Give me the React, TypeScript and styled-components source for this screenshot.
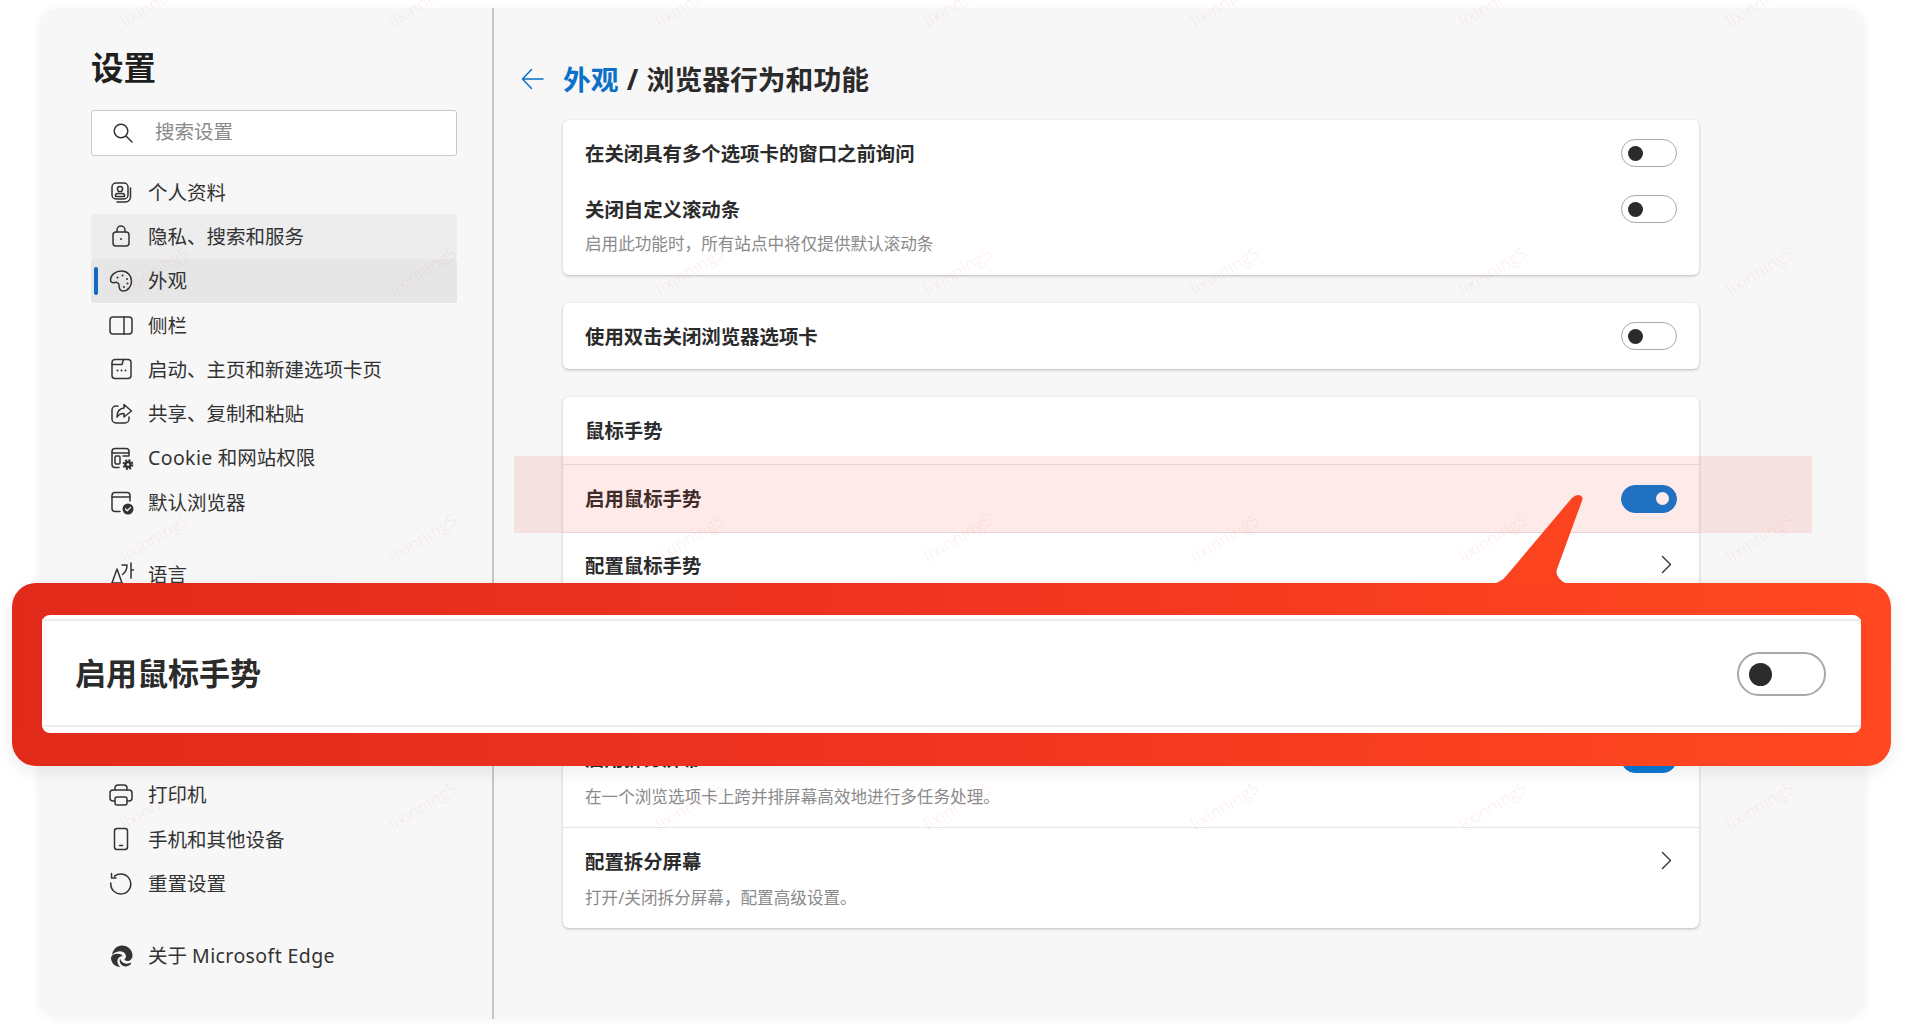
import React from 'react';
import styled, { createGlobalStyle } from 'styled-components';

const Global = createGlobalStyle`
  html, body { margin: 0; padding: 0; background: #fff; overflow: hidden; }
  body { font-family: "Noto Sans", "Noto Sans CJK SC", sans-serif; color: #303030; }
`;

const CJK = `"Noto Sans", "Noto Sans CJK SC", sans-serif`;

const Page = styled.div`
  position: relative;
  box-sizing: border-box;
  width: 1907px;
  height: 1026px;
  padding: 8px 41px 7px 38px;
  overflow: hidden;
  background: #fff;
`;
const Win = styled.div`
  display: flex;
  height: 100%;
  background: #f7f7f7;
  border-radius: 22px;
  box-shadow: 0 1px 9px rgba(0, 0, 0, 0.05);
`;
const Sidebar = styled.aside`
  box-sizing: border-box;
  width: 456px;
  flex: none;
  padding: 40px 35px 0 53px;
  border-right: 2px solid #c8c8c8;
`;
const Title = styled.h1`
  margin: 0;
  font: 700 32.5px/40px ${CJK};
  color: #1f1f1f;
`;
const Search = styled.div`
  box-sizing: border-box;
  display: flex;
  align-items: center;
  height: 46px;
  margin-top: 22px;
  padding-left: 20px;
  gap: 21px;
  background: #fff;
  border: 1.5px solid #c9c9c9;
  border-radius: 3px;
`;
const Placeholder = styled.span`
  padding-bottom: 2px;
  font: 400 19.5px/24px ${CJK};
  color: #8a8a8a;
`;
const Nav = styled.nav`
  margin-top: 14px;
`;
const NavRow = styled.div<{ $bg?: string; $gap?: number }>`
  position: relative;
  display: flex;
  align-items: center;
  height: 44.3px;
  margin-top: ${(p) => p.$gap ?? 0}px;
  padding-left: 17px;
  gap: 14px;
  background: ${(p) => p.$bg ?? 'transparent'};
  border-radius: 3px;
  font: 400 19.5px/24px ${CJK};
  color: #333;
`;
const NavText = styled.span`
  padding-top: 1px;
`;
const Latin = styled.span`
  letter-spacing: 0.4px;
`;
const Marker = styled.span`
  position: absolute;
  left: 3px;
  top: 8px;
  bottom: 8px;
  width: 4px;
  border-radius: 2px;
  background: #0f6cc4;
`;
const IconBox = styled.span`
  display: flex;
  align-items: center;
  justify-content: center;
  width: 26px;
  height: 26px;
  flex: none;
  color: #333;
`;
const Main = styled.main`
  flex: 1;
  padding: 51px 0 0 27px;
`;
const Heading = styled.div`
  display: flex;
  align-items: center;
  gap: 19px;
  height: 40px;
  font: 700 27.8px/40px ${CJK};
  word-spacing: 1px;
  color: #2b2b2b;
`;
const Crumb = styled.span`
  color: #0b70c8;
`;
const Cards = styled.div`
  display: flex;
  flex-direction: column;
  gap: 28px;
  width: 1136px;
  margin: 21px 0 0 42px;
`;
const Card = styled.section<{ $pt?: number; $pb?: number }>`
  background: #fff;
  border-radius: 6px;
  padding: ${(p) => p.$pt ?? 0}px 0 ${(p) => p.$pb ?? 0}px;
  box-shadow: 0 1px 3px rgba(0, 0, 0, 0.25);
`;
const Row = styled.div<{ $h: number; $line?: boolean; $mt?: number }>`
  box-sizing: border-box;
  display: flex;
  align-items: center;
  justify-content: space-between;
  height: ${(p) => p.$h}px;
  margin-top: ${(p) => p.$mt ?? 0}px;
  padding: 0 22px;
  border-top: ${(p) => (p.$line ? '1px solid #e6e6e6' : '0')};
`;
const Label = styled.span<{ $low?: boolean; $high?: boolean }>`
  padding: ${(p) => (p.$low ? 2 : 0)}px 0 ${(p) => (p.$high ? 2 : 0)}px;
  font: 700 19.4px/26px ${CJK};
  color: #2b2b2b;
`;
const Desc = styled.div<{ $mt?: number; $pb?: number }>`
  margin-top: ${(p) => p.$mt ?? 0}px;
  padding: 0 0 ${(p) => p.$pb ?? 0}px 22px;
  font: 400 16.6px/20px ${CJK};
  color: #8a8a8a;
`;
const Toggle = styled.span<{ $on?: boolean }>`
  box-sizing: border-box;
  display: flex;
  align-items: center;
  justify-content: ${(p) => (p.$on ? 'flex-end' : 'flex-start')};
  width: 56px;
  height: 28px;
  padding: 0 ${(p) => (p.$on ? 7 : 6)}px;
  border-radius: 14px;
  background: ${(p) => (p.$on ? '#0a78d4' : '#fff')};
  border: 1.5px solid ${(p) => (p.$on ? '#0a78d4' : '#a8a8a8')};
  &::after {
    content: '';
    width: ${(p) => (p.$on ? 13 : 15)}px;
    height: ${(p) => (p.$on ? 13 : 15)}px;
    border-radius: 50%;
    background: ${(p) => (p.$on ? '#fff' : '#2b2b2b')};
  }
`;
const Chevron = styled.svg`
  width: 11px;
  height: 19px;
  margin: -4px 5px 0 0;
`;
const Highlight = styled.div`
  position: absolute;
  left: 514px;
  top: 456px;
  width: 1298px;
  height: 77px;
  background: rgba(250, 60, 40, 0.1);
`;
const Marks = styled.div`
  position: absolute;
  left: 21px;
  top: -131px;
  display: grid;
  grid-template-columns: repeat(7, 267.5px);
  grid-auto-rows: 267.5px;
  pointer-events: none;
`;
const Mark = styled.span`
  display: flex;
  align-items: center;
  justify-content: center;
  transform: rotate(-31deg);
  font: 400 17px/20px "Open Sans", sans-serif;
  color: rgba(235, 90, 90, 0.09);
`;
const Banner = styled.div`
  position: absolute;
  left: 12px;
  top: 583px;
  box-sizing: border-box;
  width: 1879px;
  height: 183px;
  padding: 32px 30px 33px 30px;
  border-radius: 24px;
  background: linear-gradient(92deg, #e22a1b 0%, #ee3320 45%, #fb4320 85%, #ff4822 100%);
  box-shadow: 0 6px 18px rgba(0, 0, 0, 0.08);
`;
const Tail = styled.svg`
  position: absolute;
  left: 1468px;
  top: -93px;
  width: 110px;
  height: 96px;
`;
const BannerCard = styled.div`
  box-sizing: border-box;
  height: 100%;
  padding: 4px 0 6px;
  background: #fff;
  border-radius: 8px;
`;
const BannerRow = styled.div`
  box-sizing: border-box;
  display: flex;
  align-items: center;
  justify-content: space-between;
  height: 100%;
  padding: 0 35px 0 33px;
  border-top: 2px solid #ececec;
  border-bottom: 2px solid #ececec;
`;
const BannerLabel = styled.span`
  font: 700 31px/40px ${CJK};
  color: #2b2b2b;
`;
const BigToggle = styled.span`
  box-sizing: border-box;
  display: flex;
  align-items: center;
  width: 89px;
  height: 44px;
  margin-top: 2px;
  padding-left: 10px;
  border-radius: 22px;
  background: #fff;
  border: 2px solid #a8a8a8;
  &::after {
    content: '';
    width: 23px;
    height: 23px;
    border-radius: 50%;
    background: #2b2b2b;
  }
`;

const Ico = ({ children }: { children: React.ReactNode }) => (
  <IconBox>
    <svg width="26" height="26" viewBox="0 0 26 26" fill="none" stroke="currentColor" strokeWidth="1.5" strokeLinecap="round" strokeLinejoin="round">
      {children}
    </svg>
  </IconBox>
);

const icons: Record<string, React.ReactNode> = {
  profile: (
    <>
      <rect x="4" y="4" width="16" height="16" rx="4" />
      <path d="M22.5 9v9a5 5 0 0 1-5 5H9" />
      <circle cx="12" cy="10" r="2.6" />
      <path d="M7.5 17.5v-1a2 2 0 0 1 2-2h5a2 2 0 0 1 2 2v1z" />
    </>
  ),
  lock: (
    <>
      <rect x="5" y="9" width="16" height="14" rx="3" />
      <path d="M9 9V7a4 4 0 0 1 8 0v2" />
      <circle cx="13" cy="16" r="1" fill="currentColor" stroke="none" />
    </>
  ),
  palette: (
    <>
      <path d="M13.5 3C7.5 3 2.5 7 2.5 12c0 2.5 2.5 3 4.5 2.5 2-.5 4 .5 4 2.5s.5 6 4 6c5 0 8.5-4.5 8.5-10S19.5 3 13.5 3z" />
      <circle cx="9.500" cy="9.500" r="1" fill="currentColor" stroke="none" />
      <circle cx="14.500" cy="7.500" r="1" fill="currentColor" stroke="none" />
      <circle cx="19" cy="11" r="1" fill="currentColor" stroke="none" />
      <circle cx="19.500" cy="15.500" r="1" fill="currentColor" stroke="none" />
      <circle cx="16" cy="19" r="1" fill="currentColor" stroke="none" />
    </>
  ),
  sidebar: (
    <>
      <rect x="2" y="5" width="22" height="17" rx="3" />
      <path d="M16 5v17" />
    </>
  ),
  startup: (
    <>
      <rect x="4" y="3.500" width="19" height="19" rx="3" />
      <path d="M4 8.500h10l1.500-5" />
      <circle cx="9.500" cy="14.500" r="1" fill="currentColor" stroke="none" />
      <circle cx="13.500" cy="14.500" r="1" fill="currentColor" stroke="none" />
      <circle cx="17.500" cy="14.500" r="1" fill="currentColor" stroke="none" />
    </>
  ),
  share: (
    <>
      <path d="M10 5H8a4 4 0 0 0-4 4v9a4 4 0 0 0 4 4h9a4 4 0 0 0 4-4v-2" />
      <path d="M16 3.500 23.500 10 16 16v-3.500c-3.500 0-5.500 1-7 3.500 0-5 2.500-8.500 7-9z" />
    </>
  ),
  cookie: (
    <>
      <path d="M11 22.500H7a3 3 0 0 1-3-3v-13a3 3 0 0 1 3-3h11a3 3 0 0 1 3 3V11" />
      <path d="M4 8h17" />
      <rect x="7" y="11" width="5" height="8" rx="1" />
      <path d="M15 11h5" />
      <circle cx="20" cy="19.500" r="4.400" strokeWidth="2" strokeDasharray="2 1.450" strokeLinecap="butt" />
      <circle cx="20" cy="19.500" r="3.800" fill="currentColor" stroke="none" />
      <circle cx="20" cy="19.500" r="1.300" fill="#f7f7f7" stroke="none" />
    </>
  ),
  browser: (
    <>
      <path d="M12 22.500H7a3 3 0 0 1-3-3v-13a3 3 0 0 1 3-3h12a3 3 0 0 1 3 3V12" />
      <path d="M4 8h18" />
      <circle cx="20" cy="20" r="5.500" fill="currentColor" stroke="none" />
      <path d="m17.500 20 1.800 1.800 3.200-3.400" stroke="#f7f7f7" strokeWidth="1.300" />
    </>
  ),
  language: (
    <>
      <path d="M1.500 28 9 7l7.500 21" />
      <path d="M4 21h10" />
      <path d="M14 3h5c0 4-1 7-4.500 9.500" />
      <path d="M23 1v15M23 8h2.500" />
    </>
  ),
  printer: (
    <>
      <path d="M7 8V6a3 3 0 0 1 3-3h6a3 3 0 0 1 3 3v2" />
      <path d="M7 19H5a3 3 0 0 1-3-3v-5a3 3 0 0 1 3-3h16a3 3 0 0 1 3 3v5a3 3 0 0 1-3 3h-2" />
      <rect x="7" y="15" width="12" height="8" rx="2" />
    </>
  ),
  phone: (
    <>
      <rect x="6.500" y="2.500" width="13" height="21" rx="2.500" />
      <path d="M11.500 19.500h3" />
    </>
  ),
  reset: (
    <>
      <path d="M6.500 6.200a10 10 0 1 1-3.700 6.800" />
      <path d="M3.500 3.500v4.500H8" />
    </>
  ),
  edge: (
    <g fill="currentColor" stroke="none">
      <path d="M4 12.500C4.500 6.500 9 2.500 14 2.500 20 2.500 24.500 7 24.500 12.500 24.500 16 22 18 19.500 18 17.500 18 16.500 17 16.500 16 18 15.500 18.500 13.500 17.500 11.500 16 8.500 12 7.500 8.500 9 6 10 4.500 11 4 12.500Z" />
      <path d="M3 14.500C3.500 12.500 6 10.800 9.500 10.800 12 10.800 14 11.700 14.500 13 11 13.500 9 16 9.500 19.500 10 21.500 11 23 12.500 24 7 24 3 20 3 14.500Z" />
      <path d="M12 15.500C11 18.500 12.500 22 15.500 23 18 24 21 23 23 21V19.500C21 20.500 17.500 21.500 15 19.500 13.500 18.500 12.500 17 12 15.500Z" />
    </g>
  ),
};

type Item = { icon: string; text: string; bg?: string; active?: boolean; gap?: number };

const items: Item[] = [
  { icon: 'profile', text: '个人资料' },
  { icon: 'lock', text: '隐私、搜索和服务', bg: '#ededed' },
  { icon: 'palette', text: '外观', bg: '#e6e6e6', active: true },
  { icon: 'sidebar', text: '侧栏' },
  { icon: 'startup', text: '启动、主页和新建选项卡页' },
  { icon: 'share', text: '共享、复制和粘贴' },
  { icon: 'cookie', text: 'Cookie 和网站权限' },
  { icon: 'browser', text: '默认浏览器' },
  { icon: 'language', text: '语言', gap: 28.4 },
  { icon: 'printer', text: '打印机', gap: 175.7 },
  { icon: 'phone', text: '手机和其他设备' },
  { icon: 'reset', text: '重置设置' },
  { icon: 'edge', text: '关于 Microsoft Edge', gap: 28 },
];

const NavLabel = ({ text }: { text: string }) => (
  <NavText>
    {text.split(/([A-Za-z][A-Za-z ]*[a-z])/).map((part, i) => (i % 2 ? <Latin key={i}>{part}</Latin> : part))}
  </NavText>
);

const ChevronIcon = () => (
  <Chevron viewBox="0 0 11 19" fill="none" stroke="#333" strokeWidth="1.4" strokeLinecap="round" strokeLinejoin="round">
    <path d="M1.500 1.500 9.500 9.500 1.500 17.500" />
  </Chevron>
);

export default function App() {
  return (
    <>
      <Global />
      <Page>
        <Win>
          <Sidebar>
            <Title>设置</Title>
            <Search>
              <svg width="22" height="22" viewBox="0 0 22 22" fill="none" stroke="#333" strokeWidth="1.5" strokeLinecap="round">
                <circle cx="9" cy="9" r="6.800" />
                <path d="m14 14 6 6" />
              </svg>
              <Placeholder>搜索设置</Placeholder>
            </Search>
            <Nav>
              {items.map((it) => (
                <NavRow key={it.text} $bg={it.bg} $gap={it.gap}>
                  {it.active && <Marker />}
                  <Ico>{icons[it.icon]}</Ico>
                  <NavLabel text={it.text} />
                </NavRow>
              ))}
            </Nav>
          </Sidebar>
          <Main>
            <Heading>
              <svg width="23" height="22" viewBox="0 0 23 22" fill="none" stroke="#0b70c8" strokeWidth="1.5" strokeLinecap="round" strokeLinejoin="round">
                <path d="M22 11H1.500M10.500 1.500 1.500 11l9 9.500" />
              </svg>
              <span>
                <Crumb>外观</Crumb> / 浏览器行为和功能
              </span>
            </Heading>
            <Cards>
              <Card $pt={5} $pb={21}>
                <Row $h={56}>
                  <Label $low>在关闭具有多个选项卡的窗口之前询问</Label>
                  <Toggle />
                </Row>
                <Row $h={56}>
                  <Label $low>关闭自定义滚动条</Label>
                  <Toggle />
                </Row>
                <Desc $mt={-3}>启用此功能时，所有站点中将仅提供默认滚动条</Desc>
              </Card>
              <Card>
                <Row $h={66}>
                  <Label $low>使用双击关闭浏览器选项卡</Label>
                  <Toggle />
                </Row>
              </Card>
              <Card>
                <Row $h={67}>
                  <Label>鼠标手势</Label>
                </Row>
                <Row $h={68} $line>
                  <Label>启用鼠标手势</Label>
                  <Toggle $on />
                </Row>
                <Row $h={68} $line>
                  <Label $high>配置鼠标手势</Label>
                  <ChevronIcon />
                </Row>
                <Row $h={56} $mt={131}>
                  <Label>启用拆分屏幕</Label>
                  <Toggle $on />
                </Row>
                <Desc $pb={20}>在一个浏览选项卡上跨并排屏幕高效地进行多任务处理。</Desc>
                <Row $h={70} $line>
                  <Label $high>配置拆分屏幕</Label>
                  <ChevronIcon />
                </Row>
                <Desc $mt={-9} $pb={20}>打开/关闭拆分屏幕，配置高级设置。</Desc>
              </Card>
            </Cards>
          </Main>
        </Win>
        <Highlight />
        <Marks>
          {Array.from({ length: 28 }, (_, i) => (
            <Mark key={i}>lixinning5</Mark>
          ))}
        </Marks>
        <Banner>
          <Tail viewBox="0 0 110 96">
            <path d="M10 94Q20 93 25.500 86.700L91.700 8.300Q96.700 3.500 100.500 5.500Q103.500 7.500 102.300 10L76.700 80Q75 88 86.700 94V96H10Z" fill="#fb4320" />
          </Tail>
          <BannerCard>
            <BannerRow>
              <BannerLabel>启用鼠标手势</BannerLabel>
              <BigToggle />
            </BannerRow>
          </BannerCard>
        </Banner>
      </Page>
    </>
  );
}
